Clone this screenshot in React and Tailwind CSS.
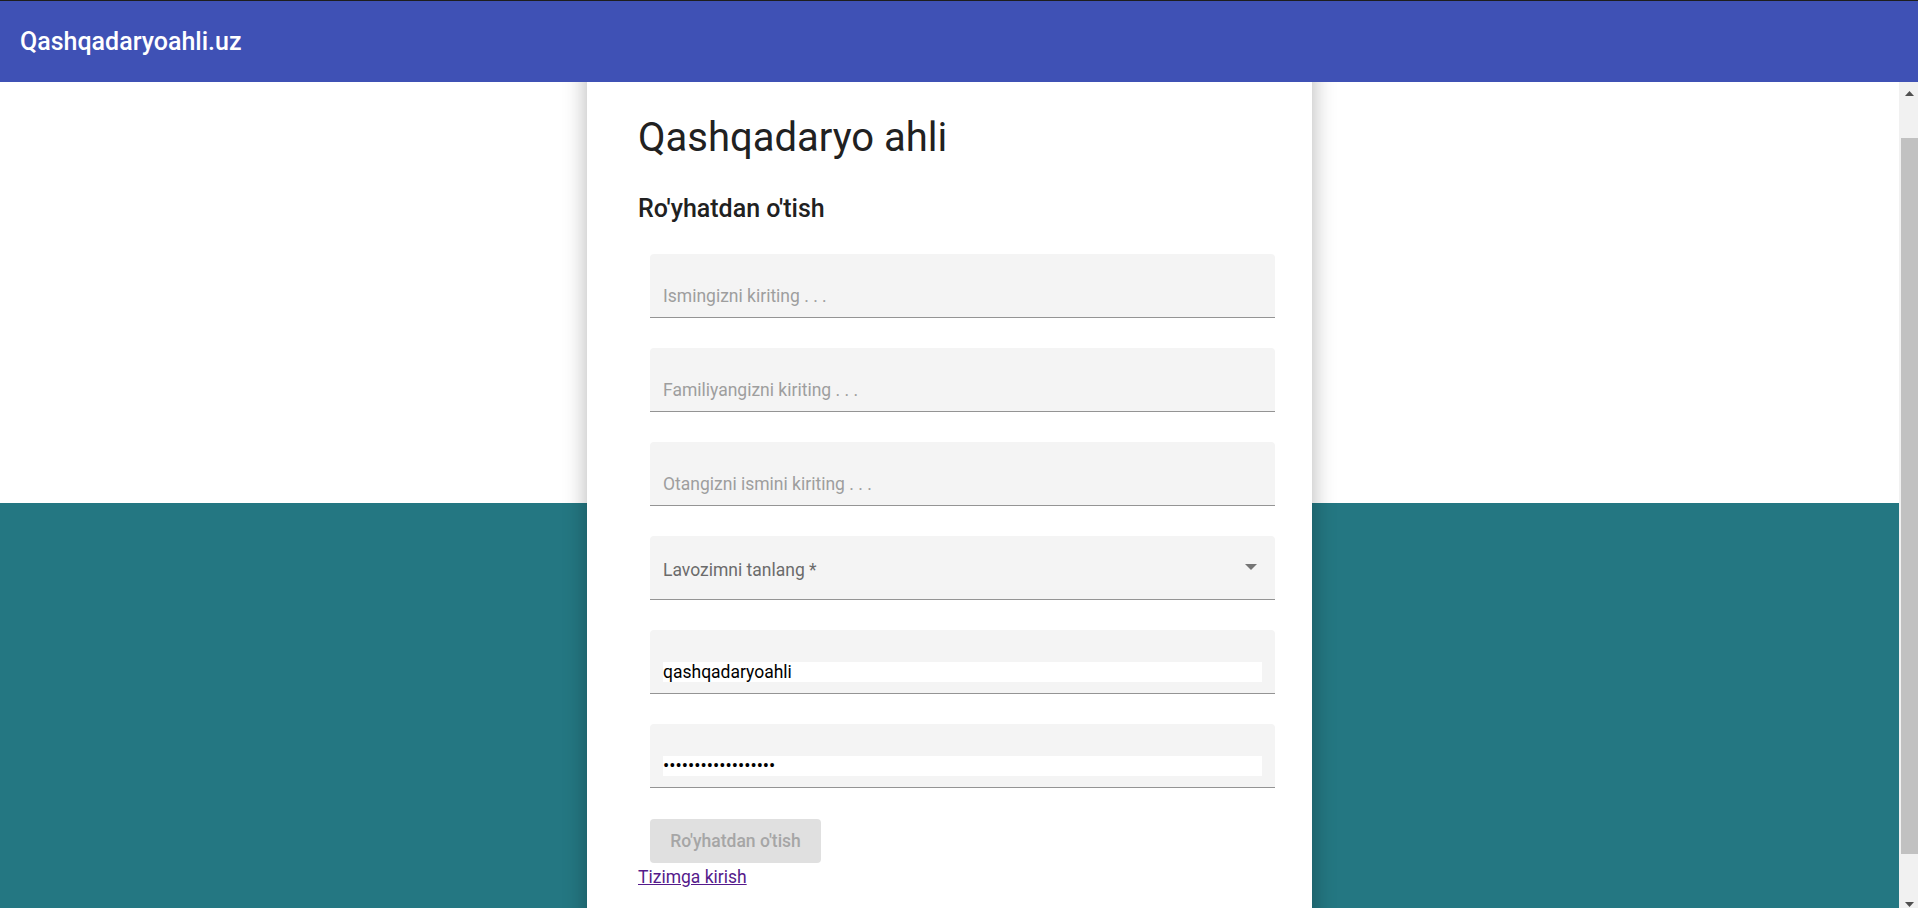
import { useLayoutEffect, useRef } from 'react';

const fieldBox = 'h-[64px] rounded-t-[4px] border-b border-[#949494] bg-[#f4f4f4]';
const inputBase = 'block h-[20px] w-full leading-[20px] outline-none';

const TextField = ({ placeholder }) => (
  <div className={`${fieldBox} px-[13px] pt-[32px]`}>
    <input type="text" placeholder={placeholder} className={`${inputBase} bg-transparent text-[17.5px] text-black placeholder:text-[#9e9e9e]`} />
  </div>
);

const FilledField = ({ type, value, size }) => (
  <div className={`${fieldBox} px-[13px] pt-[32px]`}>
    <input type={type} defaultValue={value} className={`${inputBase} bg-white text-black ${size}`} />
  </div>
);

const SelectField = ({ label }) => (
  <div className={`${fieldBox} flex items-start justify-between pl-[13px] pr-[18px] pt-[24px]`}>
    <span className="text-[17.5px] leading-[20px] text-[#6b6b6b]">{label}</span>
    <svg width="12" height="6" viewBox="0 0 12 6" className="mt-[4px]">
      <path d="M0 0 L12 0 L6 6 Z" fill="#757575" />
    </svg>
  </div>
);

const ScrollBar = () => (
  <div className="flex w-[19px] shrink-0 flex-col bg-[#f1f1f1]">
    <div className="h-[17px] pl-[6px] pt-[9px]">
      <svg width="9" height="5" viewBox="0 0 9 5" className="block">
        <path d="M0 5 L4.5 0 L9 5 Z" fill="#505050" />
      </svg>
    </div>
    <div className="flex-1 pl-[2px] pt-[39px]">
      <div className="h-[716px] bg-[#c1c1c1]" />
    </div>
    <div className="h-[17px] pl-[6px] pt-[11px]">
      <svg width="9" height="5" viewBox="0 0 9 5" className="block">
        <path d="M0 0 L9 0 L4.5 5 Z" fill="#505050" />
      </svg>
    </div>
  </div>
);

export default function App() {
  const scrollRef = useRef(null);

  useLayoutEffect(() => {
    if (scrollRef.current) scrollRef.current.scrollTop = 45;
  }, []);

  return (
    <div className="flex h-screen flex-col font-['Roboto','Liberation_Sans',sans-serif]">
      <header className="flex h-[82px] shrink-0 items-center border-t border-[#1e1e1e] bg-[#3f51b5] px-[20px]">
        <span className="text-[25px] font-medium text-white">Qashqadaryoahli.uz</span>
      </header>

      <div className="flex min-h-0 flex-1">
        <main ref={scrollRef} className="min-w-0 flex-1 overflow-hidden">
          <div className="flex h-[913px] justify-center bg-[linear-gradient(to_bottom,#ffffff_466px,#247782_466px)]">
            <div className="w-[725px] bg-white pl-[51px] pr-[37px] pt-[77px] shadow-[0_0_22px_rgba(0,0,0,0.3)]">
              <h1 className="text-[40px] leading-[48px] text-[#212121]">Qashqadaryo ahli</h1>
              <h2 className="mt-[33px] text-[25px] font-medium leading-[28px] text-[#212121]">Ro'yhatdan o'tish</h2>

              <form className="ml-[12px] mt-[31px] flex flex-col" onSubmit={(e) => e.preventDefault()}>
                <div className="flex flex-col gap-[30px]">
                  <TextField placeholder="Ismingizni kiriting . . ." />
                  <TextField placeholder="Familiyangizni kiriting . . ." />
                  <TextField placeholder="Otangizni ismini kiriting . . ." />
                  <SelectField label="Lavozimni tanlang *" />
                  <FilledField type="text" value="qashqadaryoahli" size="text-[17.5px]" />
                  <FilledField type="password" value="qashqadaryoahli123" size="text-[18.5px]" />
                </div>
                <button type="submit" disabled className="mt-[31px] h-[44px] w-[171px] rounded-[4px] bg-[#e0e0e0] text-[17.5px] font-medium text-[#a6a6a6]">
                  Ro'yhatdan o'tish
                </button>
              </form>

              <a href="#" className="mt-[4px] block w-fit text-[17.5px] leading-[21px] text-[#551a8b] underline">
                Tizimga kirish
              </a>
            </div>
          </div>
        </main>
        <ScrollBar />
      </div>
    </div>
  );
}
